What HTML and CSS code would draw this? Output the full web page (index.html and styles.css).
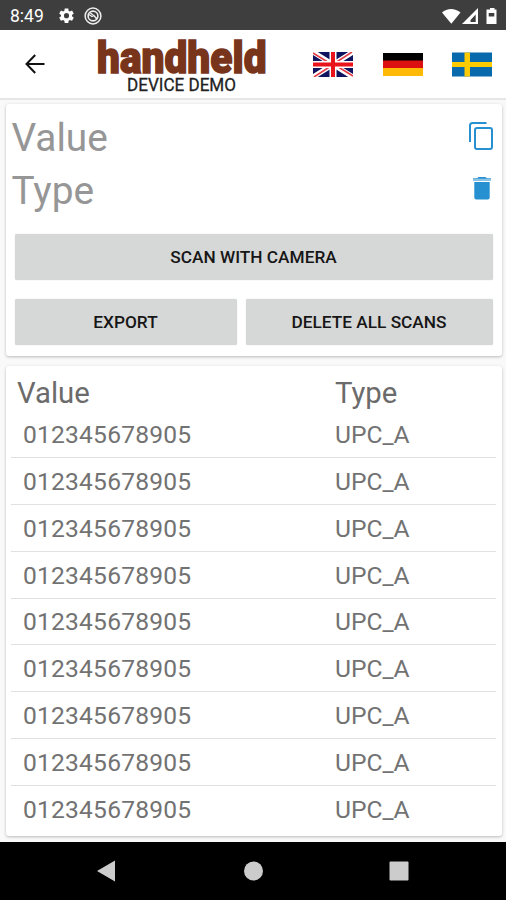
FILE: index.html
```
<!DOCTYPE html>
<html lang="en">
<head>
<meta charset="utf-8">
<title>Handheld Device Demo</title>
<link rel="stylesheet" href="styles.css">
</head>
<body>
<div class="status">
  <span class="clock">8:49</span>
  <svg class="gear" viewBox="0 0 24 24"><path fill="#fff" fill-rule="evenodd" d="M9.500 2h5l.5 3.200 1.800 1 3-1.200 2.500 4.300-2.500 2v1.900l2.500 2-2.500 4.300-3-1.200-1.800 1-.5 3.200h-5l-.5-3.200-1.800-1-3 1.200L1.700 15.200l2.500-2v-1.900l-2.500-2L4.200 5l3 1.200 1.800-1zM12 8.600a3.600 3.600 0 1 0 0 7.200 3.600 3.600 0 0 0 0-7.200z"/></svg>
  <svg class="ring" viewBox="0 0 18 18" fill="none" stroke="#eee"><circle cx="9" cy="9" r="7.900" stroke-width="1.500"/><circle cx="9" cy="9" r="4.900" stroke-width="1.600"/><path d="M5 7.500l3 2 2-1 3 4M6 5.500l7 6" stroke-width="1.300"/></svg>
  <svg class="signals" viewBox="0 0 56 18"><path fill="#fff" d="M0 5.500C5 .8 13 .8 18.500 5.500L9.300 16.800z"/><path fill="#fff" fill-rule="evenodd" d="M36 1v16H20zM33.700 7.500L28.500 13V15h5.200z"/><path fill="#fff" fill-rule="evenodd" d="M46 2.500h2V1h4.500v1.500h2V17H44.500V2.500zM46.700 6v3.500h5.600V6z"/></svg>
</div>
<header class="appbar">
  <svg class="back" viewBox="0 0 20 20" fill="none" stroke="#111" stroke-width="2"><path d="M19.500 10H2M10.200 1L1.500 10l8.700 9"/></svg>
  <svg class="logo" viewBox="0 0 172 66">
    <text class="brand" x="1" y="42" textLength="169.500" lengthAdjust="spacingAndGlyphs">handheld</text>
    <text class="sub" x="31" y="60" textLength="109" lengthAdjust="spacingAndGlyphs">DEVICE DEMO</text>
  </svg>
  <div class="flags">
    <svg viewBox="0 0 40 25"><path fill="#10145f" d="M0 0h40v25H0z"/><path stroke="#fff" stroke-width="5" d="M0 0l40 25M40 0L0 25"/><path stroke="#e33b45" stroke-width="1.500" d="M0 1l18 11M22 13l18 11M39 0L22 11M18 14L1 25"/><path stroke="#fff" stroke-width="7" d="M20 0v25M0 12.500h40"/><path stroke="#e8131b" stroke-width="4" d="M20 0v25M0 12.500h40"/></svg>
    <svg viewBox="0 0 40 25"><path d="M0 1h40v8H0z"/><path fill="#dc1010" d="M0 8.500h40v8H0z"/><path fill="#ffba08" d="M0 16h40v8H0z"/></svg>
    <svg viewBox="0 0 40 25"><path fill="#0869ad" d="M0 .5h40v24H0z"/><path fill="#fecb00" d="M12.500.5H18V10h22v5H18v9.500h-5.500V15H0v-5h12.500z"/></svg>
  </div>
</header>
<main>
  <section class="card scan">
    <div class="field"><span>Value</span><svg class="copy" viewBox="0 0 24 28" fill="none" stroke="#2790d0" stroke-width="2"><path d="M17.500 1H3.500Q1 1 1 3.500V20"/><rect x="6" y="6" width="17" height="21" rx="2"/></svg></div>
    <div class="field"><span>Type</span><svg class="trash" viewBox="0 0 18 23"><path fill="#2790d0" d="M5.500 0h7l1.300 1.200H18v2.500H0V1.200h4.200zM1.300 5h15.400v15.500q0 2-2 2H3.300q-2 0-2-2z"/><path fill="#8bc3e6" d="M0 1.700h18v2.300H0z"/></svg></div>
    <div class="buttons">
      <button class="wide">SCAN WITH CAMERA</button>
      <button>EXPORT</button>
      <button>DELETE ALL SCANS</button>
    </div>
  </section>
  <section class="card results">
    <div class="head"><span>Value</span><span>Type</span></div>
    <div class="row"><span>012345678905</span><span>UPC_A</span></div>
    <div class="row"><span>012345678905</span><span>UPC_A</span></div>
    <div class="row"><span>012345678905</span><span>UPC_A</span></div>
    <div class="row"><span>012345678905</span><span>UPC_A</span></div>
    <div class="row"><span>012345678905</span><span>UPC_A</span></div>
    <div class="row"><span>012345678905</span><span>UPC_A</span></div>
    <div class="row"><span>012345678905</span><span>UPC_A</span></div>
    <div class="row"><span>012345678905</span><span>UPC_A</span></div>
    <div class="row"><span>012345678905</span><span>UPC_A</span></div>
  </section>
</main>
<nav class="navbar">
  <svg viewBox="0 0 20 22"><path fill="#ccc" d="M1 11L19 .5v21z"/></svg>
  <svg viewBox="0 0 20 22"><circle fill="#ccc" cx="10.500" cy="11" r="9.500"/></svg>
  <svg viewBox="0 0 20 22"><rect fill="#ccc" x=".5" y="1.500" width="19" height="19" rx="1"/></svg>
</nav>
</body>
</html>
```
FILE: styles.css
```
* { box-sizing: border-box; }
body {
  margin: 0;
  width: 506px;
  height: 900px;
  overflow: hidden;
  display: flex;
  flex-direction: column;
  background: #f9f9f9;
  font-family: Roboto, sans-serif;
}
svg { display: block; flex: none; }
.status {
  height: 30px;
  flex: none;
  background: #3e3e3e;
  display: flex;
  align-items: center;
  padding: 1px 8px 0 10px;
  color: #fff;
}
.clock { width: 48px; font-size: 17.500px; line-height: 30px; }
.gear { width: 17px; height: 17px; }
.ring { width: 18px; height: 18px; margin-left: 9px; }
.signals { width: 56px; height: 18px; margin-left: auto; }
.appbar {
  height: 70px;
  flex: none;
  display: flex;
  align-items: center;
  background: #fff;
  border-bottom: 2px solid #e6e6e6;
  padding: 0 14px 0 25px;
}
.back { width: 20px; height: 20px; }
.logo { width: 172px; height: 66px; margin-left: 51px; overflow: visible; }
.brand {
  font: 900 44.500px Roboto, sans-serif;
  fill: #78351b;
  stroke: #78351b;
  stroke-width: 1.500px;
}
.sub { font: 400 19px Roboto, sans-serif; fill: #222; stroke: #222; stroke-width: .3px; }
.flags { display: flex; gap: 29.500px; margin-left: auto; }
.flags svg { width: 40px; height: 25px; }
main {
  flex: 1;
  min-height: 0;
  padding: 4px 4.500px 0 5.500px;
  display: flex;
  flex-direction: column;
  gap: 10px;
}
.card {
  flex: none;
  background: #fff;
  border-radius: 3px;
  box-shadow: 0 1px 3px rgba(0, 0, 0, .26);
}
.scan { height: 252px; padding: 7px 9.500px 0 9px; }
.field {
  height: 53px;
  display: flex;
  align-items: center;
  justify-content: space-between;
  margin-left: -3px;
  font-size: 38.800px;
  color: #969696;
}
.copy { width: 24px; height: 28px; margin: 0 -1px 3px 0; }
.trash { width: 18px; height: 23px; margin: 0 1.500px 4px 0; }
.buttons {
  display: grid;
  grid-template-columns: 222px 247px;
  grid-auto-rows: 46px;
  gap: 19px 9px;
  margin-top: 16.500px;
}
button {
  border: 0;
  border-radius: 2px;
  padding: 0;
  background: #d6d8d7;
  box-shadow: 0 0 1px #c2c3c3;
  font: 500 17.250px Roboto, sans-serif;
  color: #161616;
}
.wide { grid-column: span 2; }
.results { height: 470px; padding: 0 5.500px; }
.head, .row {
  display: grid;
  align-items: center;
}
.head {
  height: 45px;
  padding: 8px 0 0 6px;
  grid-template-columns: 318px 1fr;
  font-size: 29.300px;
  line-height: 36px;
  color: #6b6b6b;
}
.row {
  height: 46.880px;
  padding: 1px 0 0 12px;
  grid-template-columns: 312px 1fr;
  font-size: 24.600px;
  color: #727272;
  border-bottom: 1.500px solid #e1e1e1;
}
.row span:first-child { letter-spacing: .2px; }
.row:last-child { border-bottom-color: transparent; }
.navbar {
  height: 58px;
  flex: none;
  background: #000;
  display: flex;
  justify-content: space-between;
  align-items: center;
  padding: 0 97px 0 96px;
}
.navbar svg { width: 20px; height: 22px; }
```
